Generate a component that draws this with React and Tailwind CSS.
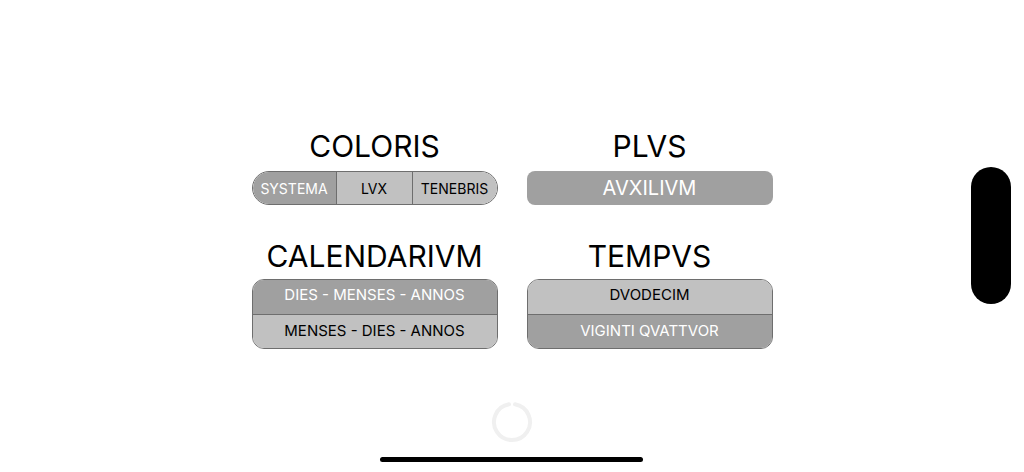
import React from "react";

const Title = ({ children }) => (
  <div className="text-center text-[30px] leading-[36px] text-black">{children}</div>
);

const App = () => {
  return (
    <div
      className="relative h-[472px] w-[1024px] overflow-hidden bg-white"
      style={{ fontFamily: "Inter, 'Liberation Sans', sans-serif" }}
    >
      <div className="grid grid-cols-[246px_246px] justify-center gap-x-[29px] gap-y-[33px] pt-[128px]">
        {/* Coloris */}
        <div className="flex flex-col gap-[7px]">
          <Title>COLORIS</Title>
          <div className="flex h-[34px] overflow-hidden rounded-full border border-[#6e6e6e] text-[14px]">
            <div className="flex w-[83px] items-center justify-center bg-[#a0a0a0] text-white">SYSTEMA</div>
            <div className="flex w-[76px] items-center justify-center border-l border-[#6e6e6e] bg-[#c1c1c1] text-black">LVX</div>
            <div className="flex flex-1 items-center justify-center border-l border-[#6e6e6e] bg-[#c1c1c1] text-black">TENEBRIS</div>
          </div>
        </div>

        {/* Plvs */}
        <div className="flex flex-col gap-[7px]">
          <Title>PLVS</Title>
          <button className="flex h-[34px] items-center justify-center rounded-[8px] bg-[#a0a0a0] text-[20px] text-white">
            AVXILIVM
          </button>
        </div>

        {/* Calendarivm */}
        <div className="flex flex-col gap-[5px]">
          <Title>CALENDARIVM</Title>
          <div className="flex flex-col overflow-hidden rounded-[12px] border border-[#6e6e6e] text-[15px]">
            <div className="flex h-[34px] items-center justify-center bg-[#a0a0a0] pb-[3px] text-white">DIES - MENSES - ANNOS</div>
            <div className="flex h-[34px] items-center justify-center border-t border-[#6e6e6e] bg-[#c1c1c1] text-black">MENSES - DIES - ANNOS</div>
          </div>
        </div>

        {/* Tempvs */}
        <div className="flex flex-col gap-[5px]">
          <Title>TEMPVS</Title>
          <div className="flex flex-col overflow-hidden rounded-[12px] border border-[#6e6e6e] text-[15px]">
            <div className="flex h-[34px] items-center justify-center bg-[#c1c1c1] pb-[3px] text-black">DVODECIM</div>
            <div className="flex h-[34px] items-center justify-center border-t border-[#6e6e6e] bg-[#a0a0a0] text-white">VIGINTI QVATTVOR</div>
          </div>
        </div>
      </div>

      {/* spinner */}
      <svg className="absolute left-[490px] top-[400px]" width="44" height="44" viewBox="0 0 44 44">
        <path
          d="M19 4.3 A18 18 0 1 0 25 4.3"
          fill="none"
          stroke="#f0f0f0"
          strokeWidth="4"
          strokeLinecap="round"
        />
      </svg>

      {/* side handle */}
      <div className="absolute left-[971px] top-[167px] h-[137px] w-[40px] rounded-full bg-black" />

      {/* home indicator */}
      <div className="absolute left-[380px] top-[457px] h-[5px] w-[263px] rounded-full bg-black" />
    </div>
  );
};

export default App;
